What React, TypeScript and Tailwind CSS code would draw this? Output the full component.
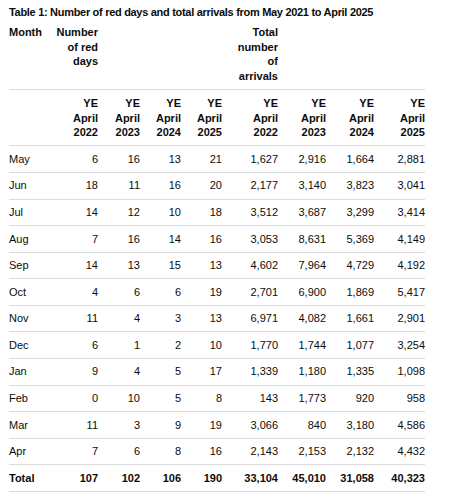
const years = ["2022", "2023", "2024", "2025"];

const rows: [string, number[], string[]][] = [
  ["May", [6, 16, 13, 21], ["1,627", "2,916", "1,664", "2,881"]],
  ["Jun", [18, 11, 16, 20], ["2,177", "3,140", "3,823", "3,041"]],
  ["Jul", [14, 12, 10, 18], ["3,512", "3,687", "3,299", "3,414"]],
  ["Aug", [7, 16, 14, 16], ["3,053", "8,631", "5,369", "4,149"]],
  ["Sep", [14, 13, 15, 13], ["4,602", "7,964", "4,729", "4,192"]],
  ["Oct", [4, 6, 6, 19], ["2,701", "6,900", "1,869", "5,417"]],
  ["Nov", [11, 4, 3, 13], ["6,971", "4,082", "1,661", "2,901"]],
  ["Dec", [6, 1, 2, 10], ["1,770", "1,744", "1,077", "3,254"]],
  ["Jan", [9, 4, 5, 17], ["1,339", "1,180", "1,335", "1,098"]],
  ["Feb", [0, 10, 5, 8], ["143", "1,773", "920", "958"]],
  ["Mar", [11, 3, 9, 19], ["3,066", "840", "3,180", "4,586"]],
  ["Apr", [7, 6, 8, 16], ["2,143", "2,153", "2,132", "4,432"]],
];

// column widths, right edges line up with the screenshot
const widths = ["w-[40px]", "w-[49px]", "w-[42px]", "w-[41px]", "w-[41px]", "w-[56px]", "w-[48px]", "w-[48px]", "w-[51px]"];

const cell = "py-[5.45px] text-right align-middle";

export default function App() {
  return (
    <div className="min-h-[502px] bg-white pl-[9px] pt-[4px] font-['Liberation_Sans',Arial,sans-serif] text-[11px] leading-[14.7px] text-[#0b0c0c]">
      <h1 className="text-[11px] font-bold leading-[16px] tracking-[-0.3px]">
        Table 1: Number of red days and total arrivals from May 2021 to April 2025
      </h1>
      <table className="w-[416px] table-fixed border-collapse">
        <colgroup>
          {widths.map((w, i) => (
            <col key={i} className={w} />
          ))}
        </colgroup>
        <thead>
          <tr className="border-b border-[#dcdcdc] align-top font-bold">
            <th className="pt-[5px] pb-[5.5px] text-left">Month</th>
            <th className="pt-[5px] pb-[5.5px] text-right">
              Number
              <br />
              of red
              <br />
              days
            </th>
            <th />
            <th />
            <th />
            <th className="pt-[5px] pb-[5.5px] text-right">
              Total
              <br />
              number
              <br />
              of
              <br />
              arrivals
            </th>
            <th />
            <th />
            <th />
          </tr>
          <tr className="border-b border-[#dcdcdc] font-bold">
            <th />
            {[...years, ...years].map((y, i) => (
              <th key={i} className="py-[5.5px] text-right">
                YE
                <br />
                April
                <br />
                {y}
              </th>
            ))}
          </tr>
        </thead>
        <tbody>
          {rows.map(([m, days, arr]) => (
            <tr key={m} className="border-b border-[#dcdcdc]">
              <td className="py-[5.45px] text-left">{m}</td>
              {days.map((d, i) => (
                <td key={i} className={cell}>
                  {d}
                </td>
              ))}
              {arr.map((a, i) => (
                <td key={i} className={cell}>
                  {a}
                </td>
              ))}
            </tr>
          ))}
          <tr className="border-b border-[#dcdcdc] font-bold">
            <td className="py-[5.45px] text-left">Total</td>
            {["107", "102", "106", "190", "33,104", "45,010", "31,058", "40,323"].map((t, i) => (
              <td key={i} className={cell}>
                {t}
              </td>
            ))}
          </tr>
        </tbody>
      </table>
    </div>
  );
}
